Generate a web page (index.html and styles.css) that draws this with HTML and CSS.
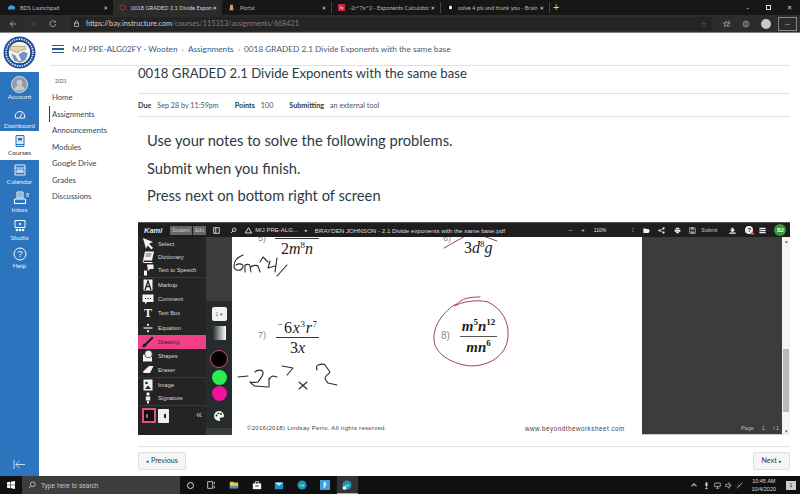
FILE: index.html
```html
<!DOCTYPE html>
<html lang="en">
<head>
<meta charset="utf-8">
<title>0018 GRADED 2.1 Divide Exponents with the same base</title>
<link rel="stylesheet" href="styles.css">
</head>
<body>
<div class="window">
  <div class="tabbar">
    <div class="tab first"><svg class="fav" viewBox="0 0 10 10"><path d="M1 8a2 2 0 0 1 .5-4 3 3 0 0 1 5.500-1 2.500 2.500 0 0 1 2 5z" fill="#3f9fd8"/></svg><span class="tab-t">BDS Launchpad</span><span class="tab-x">✕</span></div>
    <div class="tab active"><svg class="fav" viewBox="0 0 10 10"><circle cx="5" cy="5" r="3.800" fill="none" stroke="#d2412f" stroke-width="1"/></svg><span class="tab-t">0018 GRADED 2.1 Divide Expon</span><span class="tab-x">✕</span></div>
    <div class="tab"><svg class="fav" viewBox="0 0 10 10"><path d="M3 1h4v3l1 5H2l1-5z" fill="#c9a27a"/></svg><span class="tab-t">Portal</span><span class="tab-x">✕</span></div>
    <div class="tab sep"><span class="sy">Sy</span><span class="tab-t">-2r^7x^2 - Exponents Calculator</span><span class="tab-x">✕</span></div>
    <div class="tab sep"><svg class="fav" viewBox="0 0 10 10"><rect x="1" y="1" width="8" height="8" rx="2" fill="#000"/><rect x="3" y="2.500" width="4" height="5" fill="#eee"/></svg><span class="tab-t">solve 4 pls and thank you - Brain</span><span class="tab-x">✕</span></div>
    <div class="newtab">+</div>
    <div class="winctl"><span>–</span><span><i class="restore"></i></span><span>✕</span></div>
  </div>
  <div class="addrbar">
    <svg class="nav-ic" viewBox="0 0 12 12"><path d="M11 6H2M6 2 2 6l4 4" fill="none" stroke="#cfcfcf"/></svg>
    <svg class="nav-ic" viewBox="0 0 12 12"><path d="M1 6h9M6 2l4 4-4 4" fill="none" stroke="#5c5c5c"/></svg>
    <svg class="nav-ic" viewBox="0 0 12 12"><path d="M9.500 3.500A4.300 4.300 0 1 0 10 6" fill="none" stroke="#cfcfcf"/><path d="M7.500 3.500h2.500V1z" fill="#cfcfcf"/></svg>
    <div class="urlbox">
      <svg class="lock" viewBox="0 0 10 10"><rect x="2" y="4.500" width="6" height="4.500" fill="none" stroke="#ccc"/><path d="M3.300 4.500V3a1.700 1.700 0 0 1 3.400 0v1.500" fill="none" stroke="#ccc"/></svg>
      <span class="url"><b>https://bay.instructure.com</b>/courses/115313/assignments/668421</span>
      <span class="star">☆</span>
    </div>
    <div class="browser-tools">
      <svg class="tool-ic" viewBox="0 0 12 12"><path d="M5 1.500 6.200 4.500H9.500L7 6.500 8 10 5 8 2 10 3 6.500.5 4.500H3.800z" fill="none" stroke="#bbb"/><path d="M8 2h3M9 5h2M9.500 8H11" stroke="#bbb"/></svg>
      <svg class="tool-ic" viewBox="0 0 12 12"><circle cx="6" cy="6" r="4.500" fill="none" stroke="#aaa"/><path d="M2 6h8M6 1.500v9M3 3.500h6M3 8.500h6" stroke="#aaa" stroke-width=".7"/></svg>
      <span class="avatar"></span>
      <span class="more">···</span>
    </div>
  </div>

  <div class="page">
    <aside class="globalnav">
      <div class="logo">
        <svg viewBox="0 0 32 32"><circle cx="16" cy="16" r="15.500" fill="#1f4f9e"/><circle cx="16" cy="16" r="13" fill="none" stroke="#dfe7f3" stroke-width="1.600" stroke-dasharray="1.400 1"/><circle cx="16" cy="16" r="11" fill="#f6f3ea" stroke="#173f82"/><path d="M7 10h14l1 3-6 1-1 2-4-1-5-2z" fill="#e3d4ac" stroke="#8a7b5a" stroke-width=".5"/><path d="M8 17l4 2 3 5 3 0-3-6 5-3 4 2-2 6-5 3-6-2z" fill="#6f94c8"/></svg>
      </div>
      <div class="blue">
        <a class="gitem g-account"><span class="acct"><svg viewBox="0 0 16 16"><circle cx="8" cy="6" r="3" fill="#c4cbd2"/><path d="M2.500 14a5.500 5.500 0 0 1 11 0z" fill="#c4cbd2"/></svg></span>Account</a>
        <a class="gitem g-dash"><svg viewBox="0 0 14 14"><path d="M2.500 11a4.800 4.800 0 1 1 9 0zM7 10l2-3.500" fill="none" stroke="#fff"/></svg>Dashboard</a>
        <a class="gitem current"><svg viewBox="0 0 14 14"><path d="M3 1.500h8v9H3zM3 10.500v2h8v-2" fill="#d6e6f4" stroke="#2d74be"/><path d="M5 4h4v2.500H5z" fill="#2d74be"/></svg>Courses</a>
        <a class="gitem"><svg viewBox="0 0 14 14"><path d="M2 2h10v10H2zM2 5h10M4 7h6M4 9h6M4 7v3M6 7v3M8 7v3M10 7v3" fill="none" stroke="#fff" stroke-width=".9"/></svg>Calendar</a>
        <a class="gitem"><svg viewBox="0 0 14 14"><path d="M4 1h6v6H4zM5 3h4M5 5h4M1.500 8h11v4.500h-11z" fill="none" stroke="#fff"/></svg><span class="badge">8</span>Inbox</a>
        <a class="gitem"><svg viewBox="0 0 14 14"><path d="M2 1.500h10v7H2z" fill="none" stroke="#fff"/><path d="M6 3.500l2.500 1.500L6 6.500z" fill="#fff"/><circle cx="4" cy="11" r="1.300" fill="#fff"/><circle cx="7" cy="11" r="1.300" fill="#fff"/><circle cx="10" cy="11" r="1.300" fill="#fff"/></svg>Studio</a>
        <a class="gitem"><svg viewBox="0 0 14 14"><circle cx="7" cy="7" r="6" fill="none" stroke="#fff"/><text x="7" y="10" text-anchor="middle" class="help-q">?</text></svg>Help</a>
        <svg class="collapse" viewBox="0 0 14 12"><path d="M1 1v10M13 6H3M7 2 3 6l4 4" fill="none" stroke="#cfe0f0"/></svg>
      </div>
    </aside>

    <div class="canvas">
      <header class="crumbs">
        <span class="burger"><i></i><i></i><i></i></span>
        <span class="crumb-t"><a>M/J PRE-ALG02FY - Wooten</a><em>›</em><a>Assignments</a><em>›</em><span>0018 GRADED 2.1 Divide Exponents with the same base</span></span>
      </header>
      <div class="body-row">
        <nav class="coursenav">
          <div class="year">2021</div>
          <a>Home</a>
          <a class="on">Assignments</a>
          <a>Announcements</a>
          <a>Modules</a>
          <a>Google Drive</a>
          <a>Grades</a>
          <a>Discussions</a>
        </nav>
        <main class="content">
          <h1>0018 GRADED 2.1 Divide Exponents with the same base</h1>
          <div class="meta">
            <span><b>Due</b>Sep 28 by 11:59pm</span>
            <span><b>Points</b>100</span>
            <span><b>Submitting</b>an external tool</span>
          </div>
          <div class="instr">
            <p>Use your notes to solve the following problems.</p>
            <p>Submit when you finish.</p>
            <p>Press next on bottom right of screen</p>
          </div>

          <section class="kami">
            <div class="k-top">
              <span class="k-logo">Kami</span>
              <span class="k-chip">Student</span><span class="k-chip">Edu</span>
              <svg class="k-ic k-pane" viewBox="0 0 10 10"><path d="M1 1h8v8H1zM4 1v8" fill="none" stroke="#eee" stroke-width="1.200"/></svg>
              <svg class="k-ic k-search" viewBox="0 0 10 10"><circle cx="6" cy="4" r="2.500" fill="none" stroke="#eee" stroke-width="1.200"/><path d="M4 6 1.500 8.500" stroke="#eee" stroke-width="1.300"/></svg>
              <svg class="k-ic" viewBox="0 0 10 10"><path d="M5 1 9.500 8.500H.5z" fill="none" stroke="#eee" stroke-width="1.300"/></svg>
              <span class="k-path">M/J PRE-ALG...</span><span class="k-arrow">▸</span>
              <span class="k-file">BRAYDEN JOHNSON - 2.1 Divide exponents with the same base.pdf</span>
              <span class="k-zoom"><span>−</span><span>+</span><span class="k-pct">110%</span><span class="k-colon">⁝</span></span>
              <span class="k-tools">
                <svg class="k-ic" viewBox="0 0 10 10"><path d="M.5 2h3l1 1h4v1.500H2.500L.5 8.500zM2.500 4.500H10L8 8.500H.5z" fill="#eee"/></svg>
                <svg class="k-ic" viewBox="0 0 10 10"><circle cx="2" cy="5" r="1.500" fill="#eee"/><circle cx="8" cy="2" r="1.500" fill="#eee"/><circle cx="8" cy="8" r="1.500" fill="#eee"/><path d="M2 5l6-3M2 5l6 3" stroke="#eee"/></svg>
                <svg class="k-ic" viewBox="0 0 10 10"><path d="M2.500 1h5v2h-5zM1 3.500h8v3.500H7.500V6h-5v1H1zM3 6.500h4V9H3z" fill="#eee"/></svg>
                <svg class="k-ic" viewBox="0 0 10 10"><path d="M1 1h7l1 1v7H1z" fill="none" stroke="#ddd"/><path d="M3 1h4v3H3zM3 6h4v3H3z" fill="#aaa"/></svg>
                <span class="k-submit">Submit</span>
                <svg class="k-ic k-dl" viewBox="0 0 10 10"><path d="M3.500 1h3v3H9L5 7.500 1 4h2.500zM.5 8h9v1.500h-9z" fill="#eee"/></svg>
                <span class="k-help">?<i></i></span>
                <svg class="k-ic k-menuic" viewBox="0 0 10 10"><path d="M.5 1h9v1.800h-9zM.5 4.100h9v1.800h-9zM.5 7.200h9V9h-9z" fill="#eee"/></svg>
                <span class="k-user">BJ</span>
              </span>
            </div>
            <div class="k-body">
              <div class="k-menu">
                <div class="k-group g1">
                  <div class="k-item"><svg viewBox="0 0 12 12"><path d="M1 0l10 4-4 1.800 4 4L9.500 11.500l-4-4L4 11z" fill="#f2f2f2"/></svg>Select</div>
                  <div class="k-item"><svg viewBox="0 0 12 12"><path d="M3 .5h9L10 9.500H1z" fill="#f2f2f2"/><path d="M1 9.500a1.500 1.500 0 0 0 1 2h8.500" fill="none" stroke="#f2f2f2"/><path d="M4 3h5.500M3.500 5h5.500" stroke="#333" stroke-width=".7"/></svg>Dictionary</div>
                  <div class="k-item"><svg viewBox="0 0 12 12"><path d="M5 .5h6.500v4.500H8L6 7zM2 6.500h3v5H2z" fill="#f2f2f2"/></svg>Text to Speech</div>
                </div>
                <div class="k-group g2">
                  <div class="k-item"><svg viewBox="0 0 12 12"><path d="M1.500.5h9v11h-9z" fill="#f2f2f2"/><path d="M3 11 6 2l3 9M4.200 7.500h3.600" fill="none" stroke="#222" stroke-width="1.300"/></svg>Markup</div>
                  <div class="k-item"><svg viewBox="0 0 12 12"><path d="M.5 1.500h11v7.500H5l-2 2.500V9H.5z" fill="#f2f2f2"/><path d="M3 5.500h1.200M5.400 5.500h1.200M7.800 5.500H9" stroke="#222"/></svg>Comment</div>
                  <div class="k-item"><span class="k-t">T</span>Text Box</div>
                  <div class="k-item"><svg viewBox="0 0 12 12"><path d="M1.500 6h9" stroke="#f2f2f2" stroke-width="1.200"/><circle cx="6" cy="2.800" r="1.100" fill="#f2f2f2"/><circle cx="6" cy="9.200" r="1.100" fill="#f2f2f2"/></svg>Equation</div>
                  <div class="k-item k-active"><svg viewBox="0 0 12 12"><path d="M.5 11.500c0-2.500 1-4 2.500-4L10 .5l1.500 1.500L4.500 9C4.500 10.500 3 11.500.5 11.500z" fill="#1c1c1c"/></svg>Drawing</div>
                  <div class="k-item"><svg viewBox="0 0 12 12"><path d="M1 4.500h9V11.500H1z" fill="#f2f2f2"/><circle cx="6.500" cy="4" r="3.800" fill="#f2f2f2" stroke="#222" stroke-width=".7"/></svg>Shapes</div>
                  <div class="k-item"><svg viewBox="0 0 12 12"><path d="M.5 8 7 2h4.500L8 9H2.500z" fill="#f2f2f2"/></svg>Eraser</div>
                </div>
                <div class="k-group g3">
                  <div class="k-item"><svg viewBox="0 0 12 12"><path d="M1.500.5h9v11h-9z" fill="#f2f2f2"/><circle cx="4.500" cy="4" r="1.300" fill="#222"/><path d="M3 10l3-3.500 3 3.500z" fill="#222"/></svg>Image</div>
                  <div class="k-item"><svg viewBox="0 0 12 12"><circle cx="6" cy="2" r="1.700" fill="#f2f2f2"/><path d="M3.800 4.500h4.400v4H3.800zM5 9h2v2.500H5z" fill="#f2f2f2"/></svg>Signature</div>
                </div>
                <div class="k-modes">
                  <span class="k-mode dark"><i></i></span>
                  <span class="k-mode light"><i></i></span>
                  <span class="k-fold">«</span>
                </div>
              </div>
              <div class="k-palette">
                <div class="k-size">1 ▾</div>
                <div class="k-grad"></div>
                <span class="sw sw-black"></span>
                <span class="sw sw-green"></span>
                <span class="sw sw-pink"></span>
                <svg class="k-pal-ic" viewBox="0 0 12 12"><path d="M6 1a5 5 0 1 0 0 10c1.500 0 1.500-1 1-1.700-.5-.9 0-1.800 1-1.800h1.500C10.500 7.500 11 6.800 11 6c0-2.800-2.200-5-5-5z" fill="#f0f0f0"/><circle cx="3.500" cy="5.500" r=".9" fill="#222"/><circle cx="5.500" cy="3.300" r=".9" fill="#222"/><circle cx="8" cy="4" r=".9" fill="#222"/></svg>
              </div>
              <div class="k-pdf">
                <span class="qnum q5">5)</span>
                <div class="frac f5"><span class="bar"></span><span class="den">2<i>m</i><sup>8</sup><i>n</i></span></div>
                <span class="qnum q6">6)</span>
                <div class="frac f6"><span class="den">3<i>d</i><sup>8</sup><i>g</i></span></div>
                <span class="qnum q7">7)</span>
                <div class="frac f7"><span class="num"><sup class="minus">−</sup>6<i>x</i><sup>3</sup><i>r</i><sup>7</sup></span><span class="bar"></span><span class="den">3<i>x</i></span></div>
                <span class="qnum q8">8)</span>
                <div class="frac f8"><span class="num"><i>m</i><sup>5</sup><i>n</i><sup>12</sup></span><span class="bar"></span><span class="den"><i>mn</i><sup>6</sup></span></div>
                <svg class="ink" viewBox="0 0 410 198" width="410" height="198">
                  <g fill="none" stroke="#2a2a2a" stroke-width="1.100" stroke-linecap="round" stroke-linejoin="round">
                    <path d="M11 18C6 20 2 24 2 29c0 5 7 6 9 1 1-3-4-4-7-2"/>
                    <path d="M13 35v-7c2-1 5-1 5 1l1 6M19 30c2-2 6-2 7-1l2 6"/>
                    <path d="M28 25l3-5 5 5M38 24l-2 7 7-2M45 21l-2 14M45 39l10-11"/>
                    <path d="M6 140l10-1M23 135c2-2 7-3 8 0 1 3-3 7-5 10-3 1-6 0-8 0 2 2 4 4 5 4l13 1"/>
                    <path d="M37 150v-9M37 143c1-2 3-4 4-4l4 1"/>
                    <path d="M50 129l11 2-6 7M67 145l8 7M75 145l-8 7"/>
                    <path d="M85 133c-1-3 0-5 1-5 3-1 6-1 7 0l5 7c-1 2-5 4-5 6 0 2 2 4 3 5l9 2"/>
                  </g>
                  <g fill="none" stroke="#a03b70" stroke-width="1" stroke-linecap="round">
                    <path d="M212 11l23-13M251-1l14 5"/>
                    <path d="M248 60c-10 0-18 1-24 8"/>
                    <path d="M223 69c5-4 22-7 33-4 14 7 21 20 20 33 0 17-14 30-36 31-18-1-37-11-38-26-1-15 10-29 22-36"/>
                  </g>
                </svg>
                <span class="foot foot-l">©2016(2018) Lindsay Perro. All rights reserved.</span>
                <span class="foot foot-r">www.beyondtheworksheet.com</span>
              </div>
              <div class="k-side"><span class="k-page">Page</span><span class="k-page">1</span><span class="k-page">/ 1</span></div>
              <div class="k-scroll"><span class="arr">▴</span><span class="thumb"></span><span class="arr arr-d">▾</span></div>
            </div>
          </section>

          <footer class="pager">
            <a class="btn prev"><small>◂</small> Previous</a>
            <a class="btn next">Next <small>▸</small></a>
          </footer>
        </main>
      </div>
    </div>
  </div>

  <div class="taskbar">
    <svg class="win" viewBox="0 0 10 10"><path d="M0 1.500 4.300.9v3.700H0zM5 .8 10 0v4.600H5zM0 5.300h4.300V9L0 8.400zM5 5.300h5V10L5 9.200z" fill="#fff"/></svg>
    <div class="search"><svg viewBox="0 0 10 10"><circle cx="6" cy="4" r="3" fill="none" stroke="#ccc"/><path d="M4 6.200 1 9" stroke="#ccc"/></svg>Type here to search</div>
    <span class="tb-circle"></span>
    <svg class="tb-ic" viewBox="0 0 12 12"><path d="M2 2h6v8H2zM10 2v3M10 7v3" fill="none" stroke="#ddd"/></svg>
    <svg class="tb-ic" viewBox="0 0 12 12"><path d="M1 2h4l1 1h5v7H1z" fill="#eec35d"/><path d="M1 7h10v3H1z" fill="#4e91c0"/></svg>
    <svg class="tb-ic" viewBox="0 0 12 12"><path d="M1 4h10v7H1z" fill="#f5f5f5"/><path d="M4 4V2h4v2" fill="none" stroke="#f5f5f5"/><path d="M4 6h2v2H4z" fill="#e55"/><path d="M6 6h2v2H6z" fill="#5b5"/></svg>
    <svg class="tb-ic" viewBox="0 0 12 12"><path d="M1 3h10v8H1z" fill="#1f8fd0"/><path d="M1 3l5 4 5-4" fill="#cfe8f7"/></svg>
    <svg class="tb-ic" viewBox="0 0 12 12"><circle cx="6" cy="6" r="5.500" fill="#1a8fc9"/><path d="M3 8c0-3 6-4 6-1-1 2-4 2-3 0" fill="#5fdc7d"/></svg>
    <svg class="tb-ic" viewBox="0 0 12 12"><path d="M0 0h12v12H0z" fill="#3aa0dc"/><path d="M5 10V5h3M5 7h2M7 3H5v2" fill="none" stroke="#fff" stroke-width="1.200"/></svg>
    <span class="tb-active"><svg class="tb-ic" viewBox="0 0 12 12"><circle cx="6" cy="6" r="5.500" fill="#1a8fc9"/><path d="M3 8c0-3 6-4 6-1-1 2-4 2-3 0" fill="#5fdc7d"/><circle cx="3" cy="9.500" r="2.300" fill="#eee"/></svg></span>
    <div class="tray">
      <span class="caret"></span>
      <svg class="tray-ic" viewBox="0 0 10 10"><rect x="3.500" y=".5" width="3" height="6" rx="1.500" fill="#ddd"/><path d="M5 7v2M3 9.300h4" stroke="#ddd"/></svg>
      <svg class="tray-ic" viewBox="0 0 10 10"><path d="M1 1.500h8v5H1zM3 9h4M5 6.500V9" fill="none" stroke="#ccc"/></svg>
      <svg class="tray-ic" viewBox="0 0 10 10"><path d="M1 3.500h2L6 1v8L3 6.500H1z" fill="none" stroke="#ccc"/><path d="M7.500 3a3 3 0 0 1 0 4" fill="none" stroke="#ccc"/></svg>
      <svg class="tray-ic" viewBox="0 0 10 10"><path d="M1 9l3-3M3 4l3 3M6 4l3-3M4.500 5.500l2-2" stroke="#ccc" fill="none"/></svg>
      <span class="clock"><span>10:45 AM</span><span>10/4/2020</span></span>
      <span class="notif">1</span>
    </div>
  </div>
</div>
</body>
</html>
```

FILE: styles.css
```css
* { box-sizing: border-box; }
html, body { margin: 0; padding: 0; }
body { width: 800px; height: 494px; overflow: hidden; font-family: Lato, "Liberation Sans", sans-serif; color: #2d3b45; background: #fff; }
a { color: inherit; text-decoration: none; }
.window { width: 800px; height: 494px; display: flex; flex-direction: column; }

/* Browser tabs */
.tabbar { height: 15px; background: #161616; display: flex; align-items: stretch; color: #b9b9b9; font: 5.600px Lato, sans-serif; flex: none; }
.tab { width: 109px; display: flex; align-items: center; padding: 0 5px 0 6px; gap: 5px; }
.tab.first { width: 113px; padding-left: 8px; }
.tab.active { background: #2b2b2b; color: #d4d4d4; }
.tab.sep { border-left: 1px solid #444; height: 11px; align-self: center; gap: 4px; }
.tab-t { flex: 1; white-space: nowrap; min-width: 0; }
.tab-x { font: 5.500px "DejaVu Sans", sans-serif; color: #ddd; }
.fav { width: 7px; height: 7px; flex: none; }
.sy { width: 7px; height: 7px; background: #c9253f; color: #fff; font-size: 4px; text-align: center; line-height: 7px; flex: none; }
.newtab { border-left: 1px solid #444; height: 11px; align-self: center; width: 16px; padding-left: 3px; font-size: 11px; line-height: 10px; color: #ccc; }
.winctl { margin-left: auto; display: flex; align-items: center; font: 6.500px "DejaVu Sans", sans-serif; color: #ddd; }
.winctl span { width: 21px; display: flex; justify-content: center; }
.restore { display: block; width: 5px; height: 5px; border: 1px solid #ddd; }

/* Address bar */
.addrbar { height: 18px; background: #2c2c2c; border-bottom: 1px solid #7f7f7f; display: flex; align-items: center; padding-left: 9px; gap: 12px; flex: none; }
.nav-ic { width: 8px; height: 8px; flex: none; }
.urlbox { margin-left: 1px; margin-right: -1px; width: 642px; height: 14px; background: #242424; border-radius: 2px; display: flex; align-items: center; padding: 0 5px 0 3px; gap: 6px; flex: none; }
.lock { width: 7px; height: 7px; flex: none; }
.url { font: 7.300px Lato, sans-serif; color: #7f7f7f; flex: 1; white-space: nowrap; }
.url b { color: #d0d0d0; font-weight: 400; }
.star { color: #8a8a8a; font-size: 8px; }
.browser-tools { display: flex; align-items: center; gap: 11px; }
.tool-ic { width: 8px; height: 8px; }
.avatar { width: 10px; height: 10px; border-radius: 50%; background: #c9c9c9; }
.more { width: 19px; height: 14px; margin-left: -4px; border: 1px solid #8a8a8a; color: #ccc; font-size: 6px; line-height: 12px; text-align: center; }

/* Layout */
.page { flex: 1; display: flex; min-height: 0; }
.globalnav { width: 39px; flex: none; display: flex; flex-direction: column; }
.logo { height: 39px; margin-right: -4px; padding: 3px 3px 0 3px; }
.logo svg { width: 33px; height: 33px; display: block; }
.blue { flex: 1; background: #2d74be; display: flex; flex-direction: column; padding-top: 1px; position: relative; }
.gitem { height: 28px; flex: none; display: flex; flex-direction: column; align-items: center; justify-content: flex-end; color: #e5eef7; font-size: 6.500px; line-height: 9px; position: relative; padding-bottom: 2.500px; }
.gitem svg { width: 14px; height: 14px; }
.g-account { padding-bottom: 0; line-height: 8px; }
.g-dash { height: 30px; padding-bottom: 1.500px; }
.gitem.current { height: 29px; padding-bottom: 3px; background: #fff; color: #2d3b45; }
.acct { width: 17px; height: 17px; border-radius: 50%; border: 1px solid #dbe3ea; background: #8e9aa5; display: block; overflow: hidden; }
.acct svg { width: 15px; height: 15px; display: block; }
.help-q { font: 9px "Liberation Sans", sans-serif; fill: #fff; }
.badge { position: absolute; left: 26px; top: 3px; font-size: 5px; color: #fff; }
.collapse { width: 13px; height: 11px; position: absolute; left: 13px; bottom: 6px; }

.canvas { flex: 1; min-width: 0; display: flex; flex-direction: column; padding: 0 10px 0 11px; }
.crumbs { height: 33px; border-bottom: 1px solid #e1e1e1; display: flex; align-items: center; flex: none; }
.burger { width: 12px; margin-left: 2px; margin-right: 8px; display: flex; flex-direction: column; gap: 2.500px; }
.burger i { display: block; height: 1.200px; background: #2d5b8e; }
.crumb-t { font-size: 8.250px; color: #4a5a68; white-space: nowrap; display: flex; gap: 4px; }
.crumb-t a { color: #2d5b8e; }
.crumb-t em { font-style: normal; color: #999; }
.body-row { flex: 1; display: flex; min-height: 0; }
.coursenav { width: 88px; flex: none; display: flex; flex-direction: column; padding-top: 9px; font-size: 7.700px; color: #33475c; }
.year { font-size: 5px; height: 14px; line-height: 12px; padding-left: 5px; color: #555; }
.coursenav a { height: 16.500px; line-height: 16.500px; padding-left: 2px; }
.coursenav a.on { border-left: 1px solid #2d3b45; margin-left: -1px; }
.content { flex: 1; min-width: 0; display: flex; flex-direction: column; }
h1 { margin: 0; font-size: 13.150px; font-weight: 400; line-height: 14px; height: 28px; border-bottom: 1px solid #e1e1e1; color: #2d3b45; white-space: nowrap; }
.meta { height: 23px; border-bottom: 1px solid #e1e1e1; display: flex; align-items: center; gap: 16px; font-size: 7.200px; color: #555; }
.meta b { color: #2d3b45; margin-right: 6px; font-weight: 700; }
.instr { padding: 10px 0 0 9px; height: 105px; font-size: 14.700px; color: #2d3b45; }
.instr p { margin: 0; height: 27.500px; line-height: 27.500px; }

/* Kami */
.kami { height: 213px; flex: none; display: flex; flex-direction: column; font-family: "Liberation Sans", sans-serif; }
.k-top { height: 15px; background: #1e1e1e; color: #e4e4e4; display: flex; align-items: center; padding: 0 2px 0 6px; font-size: 6px; white-space: nowrap; flex: none; border-top: 1px solid #555; }
.k-logo { font: italic 700 7.500px "Liberation Sans", sans-serif; width: 26px; }
.k-chip { background: #666; color: #ccc; font-size: 5.200px; padding: 1px 2px; margin-right: 1px; height: 9px; line-height: 7px; }
.k-ic { width: 7px; height: 7px; flex: none; }
.k-pane { margin: 0 10px 0 6px; }
.k-search { margin-right: 8px; }
.k-path { margin-left: 3px; color: #ddd; font-size: 6px; }
.k-arrow { margin: 0 7px 0 7px; font-size: 5px; }
.k-file { width: 198px; font-size: 6.200px; color: #ddd; }
.k-zoom { display: flex; gap: 9px; margin-left: 56px; align-items: center; font-size: 6px; }
.k-pct { width: 29px; font-size: 5px; }
.k-colon { width: 4px; }
.k-tools { display: flex; align-items: center; gap: 8.500px; margin-left: 7px; }
.k-submit { margin-left: -3.500px; font-size: 5.200px; color: #ccc; width: 18px; }
.k-dl { margin-left: 1px; }
.k-help { width: 8px; height: 8px; margin-left: 1px; border-radius: 50%; background: #eee; color: #222; font: 700 6px/8px "Liberation Sans", sans-serif; text-align: center; position: relative; }
.k-help i { position: absolute; width: 3px; height: 3px; border-radius: 50%; background: #e2542b; right: -1px; bottom: -1px; }
.k-menuic { margin-left: -3px; }
.k-user { width: 12px; height: 12px; border-radius: 50%; background: #2e9b42; color: #fff; font: 700 5px/12px "Liberation Sans", sans-serif; text-align: center; }
.k-body { flex: 1; display: flex; min-height: 0; }
.k-menu { width: 68px; flex: none; background: #242424; display: flex; flex-direction: column; color: #d8d8d8; font-size: 5.800px; }
.k-group { border-bottom: 1px solid #3a3a3a; }
.k-item { display: flex; align-items: center; gap: 4px; padding-left: 4px; white-space: nowrap; }
.g1 .k-item { height: 13.400px; }
.g2 .k-item { height: 14.100px; }
.g3 .k-item { height: 13.400px; }
.k-item svg { width: 12px; height: 12px; flex: none; }
.k-t { width: 12px; text-align: center; font: 700 12px/12px "Liberation Serif", serif; color: #f2f2f2; }
.k-active { background: #f0408a; color: #3a1a2a; }
.k-modes { flex: 1; display: flex; align-items: center; padding: 0 2px 9px 4px; gap: 2px; }
.k-mode { height: 15px; display: flex; align-items: center; }
.k-mode i { display: block; width: 2px; height: 4px; }
.k-mode.dark { width: 14px; background: #111; border: 2px solid #e0508a; padding-left: 2px; }
.k-mode.dark i { background: #e2406f; }
.k-mode.light { width: 11px; height: 14px; background: #eee; justify-content: flex-end; padding-right: 3px; border-radius: 1px; }
.k-mode.light i { background: #222; }
.k-fold { margin-left: auto; margin-right: 2px; margin-top: -4px; font-size: 11px; color: #bbb; line-height: 10px; }
.k-palette { width: 26px; flex: none; background: linear-gradient(#3c3c3c 0, #3c3c3c 64px, #262b2d 64px, #262b2d 191px, #3c3c3c 191px); display: flex; flex-direction: column; align-items: center; padding-top: 70px; }
.k-size { width: 15px; height: 14px; background: #f2f2f2; border-radius: 2px; color: #666; font-size: 5px; line-height: 14px; text-align: center; }
.k-grad { width: 14px; height: 14px; margin-top: 5px; margin-bottom: 10px; background: linear-gradient(90deg, #222, #fff); }
.sw { border-radius: 50%; display: block; flex: none; }
.sw-black { width: 18px; height: 18px; background: #000; border: 1.500px solid #c0507f; }
.sw-green { width: 15px; height: 15px; background: #29ee4f; margin-top: 1.500px; }
.sw-pink { width: 15px; height: 15px; background: #f0129b; margin-top: 1px; }
.k-pal-ic { width: 12px; height: 12px; margin-top: 9.500px; }
.k-pdf { width: 410px; flex: none; background: #fff; position: relative; overflow: hidden; font-family: "Liberation Serif", serif; color: #222; }
.ink { position: absolute; left: 0; top: 0; overflow: visible; }
.frac { position: absolute; display: flex; flex-direction: column; align-items: center; font-size: 16px; line-height: 17px; white-space: nowrap; }
.frac .bar { display: block; height: 1px; background: #333; align-self: stretch; margin: 1px 0; }
.frac sup { font-size: 9px; line-height: 0; vertical-align: 6px; }
.frac sup.minus { margin-right: 1px; }
.f5 { left: 43px; top: 1px; width: 44px; }
.f5 .bar { margin: 0 0 1px; }
.f6 { left: 232px; top: 2px; }
.f7 { left: 44px; top: 82px; width: 43px; }
.f7 .num { letter-spacing: .7px; }
.f8 { left: 228px; top: 81px; width: 37px; font-weight: 700; font-size: 15px; }
.f8 .bar { background: #555; margin: 1px 0 2px; }
.qnum { position: absolute; font: 9px "Liberation Sans", sans-serif; color: #888; }
.q5 { left: 26px; top: -4px; }
.q6 { left: 211px; top: -4px; }
.q7 { left: 26px; top: 93px; }
.q8 { left: 209px; top: 93px; font-size: 10px; }
.foot { position: absolute; top: 188px; font: 6px "Liberation Sans", sans-serif; color: #444; white-space: nowrap; letter-spacing: .28px; }
.foot-l { left: 15px; }
.foot-r { left: 293px; font-size: 6.300px; letter-spacing: .5px; }
.k-side { width: 140px; flex: none; background: #3c3c3c; display: flex; justify-content: flex-end; align-items: flex-end; gap: 8px; padding: 0 3px 3px 0; border-bottom: 1px solid #ccc; }
.k-page { font-size: 5.500px; color: #bdbdbd; }
.k-scroll { width: 8px; flex: none; background: #f4f4f4; display: flex; flex-direction: column; align-items: center; color: #555; font-size: 5px; }
.arr { line-height: 8px; height: 8px; }
.thumb { width: 6px; height: 63px; background: #b8b8b8; margin-top: 104px; margin-left: -1px; }
.arr-d { margin-top: auto; }

.pager { flex: 1; border-top: 1px solid #e1e1e1; margin-top: 11px; padding-top: 5px; display: flex; justify-content: space-between; align-items: flex-start; }
.btn { height: 18px; line-height: 16px; font-size: 7.200px; color: #2d3b45; background: #f5f5f5; border: 1px solid #e0e0e0; border-radius: 2px; text-align: center; }
.btn small { font-size: 4.500px; }
.btn.prev { width: 48px; }
.btn.next { width: 37px; }

/* Taskbar */
.taskbar { height: 18px; background: #101010; display: flex; align-items: center; color: #ddd; flex: none; }
.win { width: 8px; height: 8px; margin: 0 7px 0 7px; flex: none; }
.search { width: 158px; height: 18px; background: #3d3d3d; display: flex; align-items: center; gap: 5px; padding-left: 6px; font: 6.500px "Liberation Sans", sans-serif; color: #c8c8c8; flex: none; }
.search svg { width: 8px; height: 8px; }
.tb-circle { width: 7px; height: 7px; border: 1px solid #ddd; border-radius: 50%; margin: 0 12px 0 7px; flex: none; }
.tb-ic { width: 10px; height: 10px; flex: none; margin-right: 12.800px; }
.tb-active { background: #333; border-bottom: 1px solid #7fb6dc; height: 18px; width: 21px; display: flex; align-items: center; justify-content: center; margin-left: -6px; }
.tb-active .tb-ic { margin: 0; }
.tray { margin-left: auto; display: flex; align-items: center; gap: 4px; padding-right: 4px; }
.caret { width: 4px; height: 4px; border-top: 1px solid #ccc; border-left: 1px solid #ccc; transform: rotate(45deg); margin: 2px 3px 0 0; }
.tray-ic { width: 7px; height: 7px; }
.clock { display: flex; flex-direction: column; align-items: center; font: 5.500px/8px "Liberation Sans", sans-serif; color: #ddd; margin: 0 6px 0 5px; }
.notif { width: 10px; height: 9px; background: #ccc; color: #111; font: 5px/9px "Liberation Sans", sans-serif; text-align: center; }
```
